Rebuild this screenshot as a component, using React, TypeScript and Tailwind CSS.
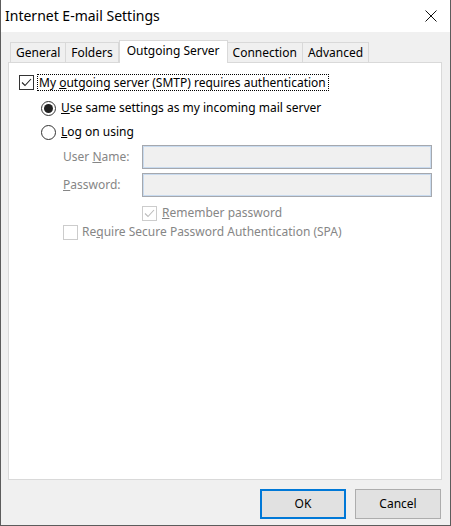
import React from 'react';

const tabs = ['General', 'Folders', 'Outgoing Server', 'Connection', 'Advanced'];

function CheckBox({ checked, disabled }: { checked?: boolean; disabled?: boolean }) {
  return (
    <span
      className={`flex h-[15px] w-[15px] shrink-0 items-center justify-center border bg-white ${
        disabled ? 'border-[#cccccc]' : 'border-[#333333]'
      }`}
    >
      {checked && (
        <svg width="11" height="9" viewBox="0 0 11 9">
          <path
            d="M1 4.5 L4 7.5 L10 1"
            fill="none"
            stroke={disabled ? '#bcbcbc' : '#222222'}
            strokeWidth="1.1"
          />
        </svg>
      )}
    </span>
  );
}

function Radio({ checked }: { checked?: boolean }) {
  return (
    <span className="flex h-[15px] w-[15px] shrink-0 items-center justify-center rounded-full border border-[#333333] bg-white">
      {checked && <span className="h-[9px] w-[9px] rounded-full bg-[#222222]" />}
    </span>
  );
}

function DisabledInput() {
  return (
    <div className="h-[24px] w-[290px] border border-[#a5a8ae] bg-[#f0f0f0] shadow-[inset_1px_1px_0_#c9dbef,inset_-1px_-1px_0_#c9dbef]" />
  );
}

export default function App() {
  return (
    <div className="flex h-[526px] w-[451px] flex-col border-x border-b border-[#5c5c5c] bg-[#f0f0f0] font-['Noto_Sans',sans-serif] text-[12px] text-black">
      {/* Title bar */}
      <div className="flex h-[32px] shrink-0 items-center justify-between bg-white pl-[4px] pr-[13px]">
        <span className="text-[14px] leading-none">Internet E-mail Settings</span>
        <svg width="12" height="12" viewBox="0 0 12 12">
          <path d="M0.5 0.5 L11.5 11.5 M11.5 0.5 L0.5 11.5" stroke="#111" strokeWidth="1" />
        </svg>
      </div>

      <div className="flex flex-1 flex-col pl-[7px] pr-[8px] pt-[8px]">
        {/* Tabs */}
        <div className="ml-[2px] flex h-[22px] items-end">
          {tabs.map((t) => {
            const active = t === 'Outgoing Server';
            return active ? (
              <div
                key={t}
                className="relative z-10 -mb-px flex h-[23px] items-center border border-b-0 border-[#d9d9d9] bg-white px-[7px] pb-[2px]"
              >
                {t}
              </div>
            ) : (
              <div
                key={t}
                className="-ml-px flex h-[20px] items-center border border-b-0 border-[#d9d9d9] bg-[#f0f0f0] px-[5px] first:ml-0"
              >
                {t}
              </div>
            );
          })}
        </div>

        {/* Panel */}
        <div className="flex h-[418px] flex-col border border-[#d9d9d9] bg-white pl-[10px] pt-[11px]">
          <div className="flex h-[17px] items-center">
            <CheckBox checked />
            <span className="ml-[3px] flex h-[17px] items-center border border-dotted border-black pl-px pr-[2px]">
              <span>
                My <u>o</u>utgoing server (SMTP) requires authentication
              </span>
            </span>
          </div>

          <div className="ml-[22px] mt-[9px] flex h-[16px] items-center">
            <Radio checked />
            <span className="ml-[5px]">
              <u>U</u>se same settings as my incoming mail server
            </span>
          </div>
          <div className="ml-[22px] mt-[8px] flex h-[16px] items-center">
            <Radio />
            <span className="ml-[5px]">
              <u>L</u>og on using
            </span>
          </div>

          <div className="ml-[44px] mt-[5px] flex flex-col gap-[4px] text-[#868686]">
            <div className="flex items-center">
              <span className="w-[79px]">
                User <u>N</u>ame:
              </span>
              <DisabledInput />
            </div>
            <div className="flex items-center">
              <span className="w-[79px]">
                <u>P</u>assword:
              </span>
              <DisabledInput />
            </div>
            <div className="ml-[79px] mt-[4px] flex h-[16px] items-center">
              <CheckBox checked disabled />
              <span className="ml-[5px]">
                <u>R</u>emember password
              </span>
            </div>
            <div className="-mt-px flex h-[16px] items-center">
              <CheckBox disabled />
              <span className="ml-[4px]">
                Re<u>q</u>uire Secure Password Authentication (SPA)
              </span>
            </div>
          </div>
        </div>

        {/* Buttons */}
        <div className="mt-[9px] flex justify-end gap-[9px] pr-px">
          <button className="h-[30px] w-[86px] border-2 border-[#0078d7] bg-[#e1e1e1]">OK</button>
          <button className="h-[30px] w-[86px] border border-[#adadad] bg-[#e1e1e1]">Cancel</button>
        </div>
      </div>
    </div>
  );
}
